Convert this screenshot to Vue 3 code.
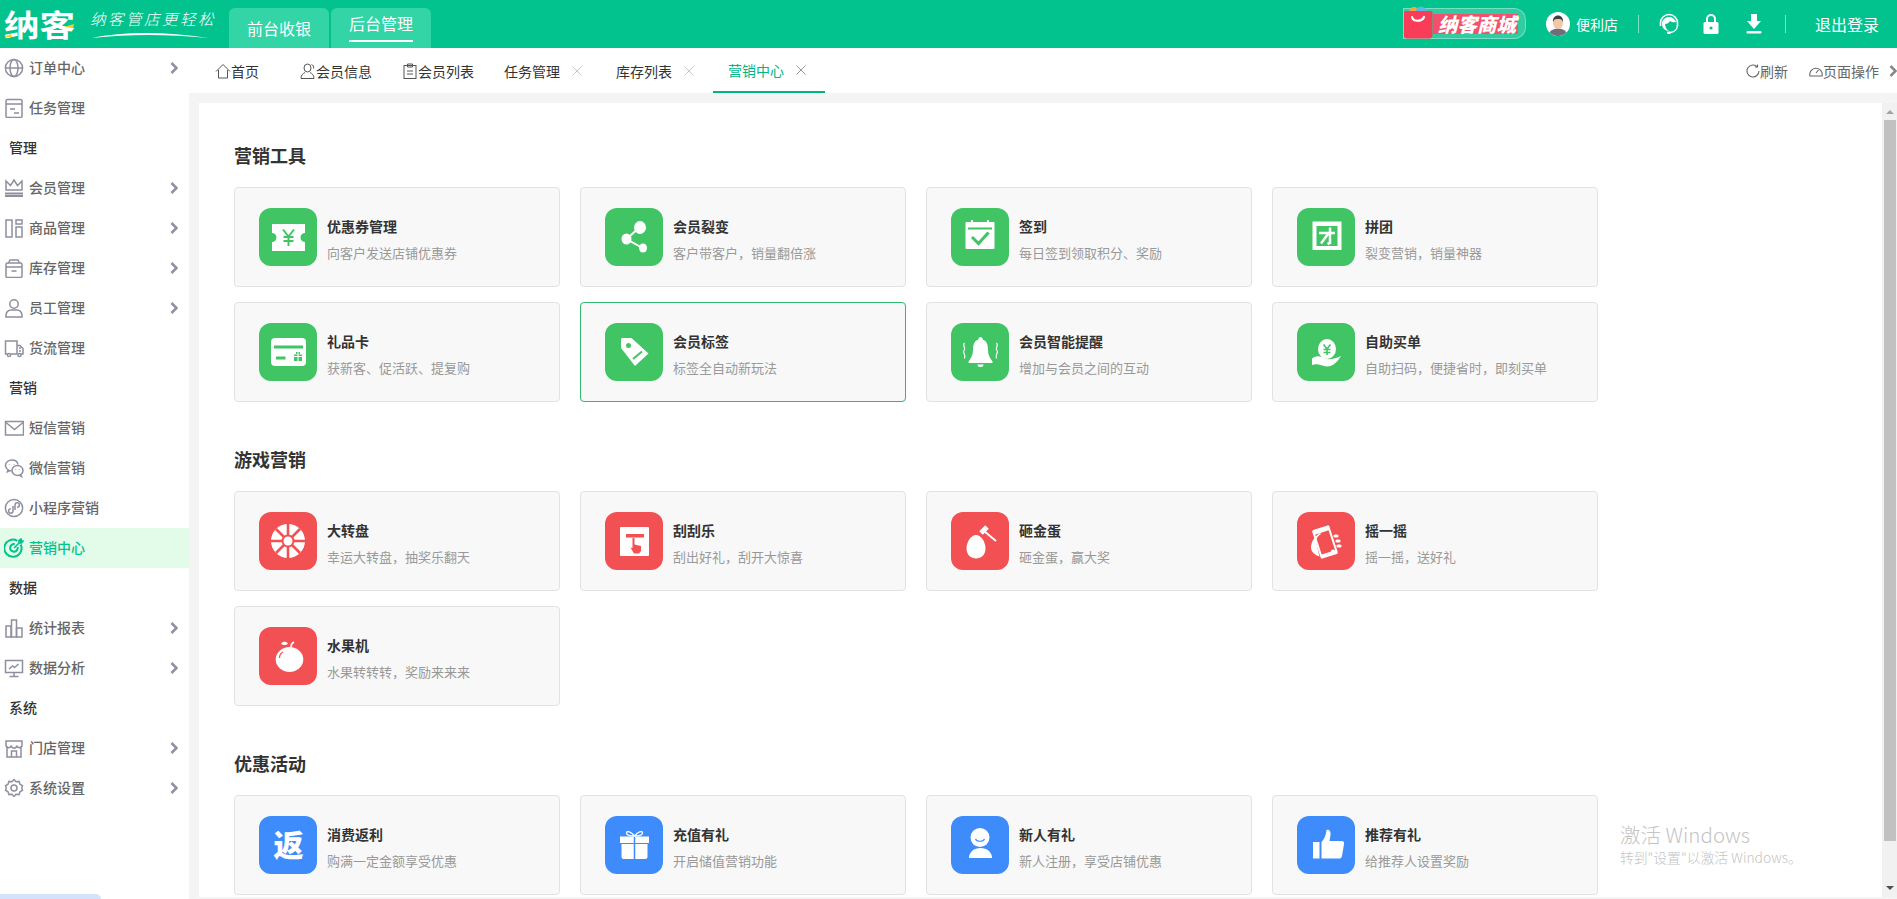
<script setup>
const navIcons = {
  globe: '<circle cx="10" cy="10" r="8.6"/><ellipse cx="10" cy="10" rx="4" ry="8.6"/><path d="M1.4 10h17.2"/>',
  task: '<rect x="2" y="1.5" width="16" height="18" rx="1.5"/><path d="M2 6h16M6 11h5M10 15h5"/>',
  crown: '<path d="M2 12V3l4.5 4.5L10 2l3.5 5.5L18 3v9z"/><path d="M1 15.5h18M1 18h18" stroke-width="2"/>',
  goods: '<rect x="2" y="2" width="6" height="17"/><rect x="12" y="2" width="6" height="4"/><rect x="12" y="9" width="6" height="10"/>',
  box: '<path d="M4.5 5l1.5-3h8l1.5 3"/><rect x="2" y="5" width="16" height="14.5" rx="1.5"/><path d="M2 9h16M7.5 13h5"/>',
  user: '<circle cx="10" cy="6" r="4.2"/><path d="M2 19v-2c0-3 2.5-5 5-5h6c2.5 0 5 2 5 5v2z"/>',
  truck: '<path d="M13 16H7M3.5 16H1.5V3h11.5v13"/><path d="M13 7.5h3l3 3v5.5h-2"/><circle cx="5" cy="17" r="1.6"/><circle cx="15.5" cy="17" r="1.6"/><path d="M15 10h2M15 13h2"/>',
  mail: '<rect x="1.5" y="3.5" width="18" height="13.5"/><path d="M2 4.5l8.5 7 8.5-7"/>',
  wechat: '<path d="M14 6.500C13.500 3.500 11 2 8 2 4.500 2 1.500 4.300 1.500 7.400c0 1.800 1 3.300 2.500 4.300l-.6 2 2.300-1.200c.7.200 1.400.3 2 .3"/><ellipse cx="13.500" cy="12.500" rx="5.500" ry="5"/><path d="M16.500 16.500l1 2-2.500-1.300M11.500 11.500v.5M15.500 11.500v.5M5.500 6.500v.5M10 6.500v.5"/>',
  mini: '<circle cx="10" cy="10" r="8.600"/><path d="M9 8v5a2.200 2.200 0 1 1-2.200-2.200M11 12V7a2.200 2.200 0 1 1 2.200 2.200"/>',
  target: '<path d="M16.700 6.500a8.600 8.600 0 1 1-3.400-3.700" stroke-width="2"/><path d="M13.600 9a3.800 3.800 0 1 1-2.800-2.800" stroke-width="2"/><path d="M10 10l7-7M15 5V2.500L17 1l.3 1.700L19 3l-1.500 2z" stroke-width="1.600"/>',
  chart: '<rect x="2" y="8" width="5" height="11"/><rect x="7.500" y="2" width="5" height="17"/><rect x="12.500" y="10" width="5.500" height="9"/>',
  monitor: '<rect x="1.500" y="2.500" width="17" height="12"/><path d="M10 14.500V18M5.500 18.500h9M5 11l3.500-3 2 1.500L14.500 6"/>',
  store: '<path d="M3 8v11h14V8M2 3h16v4.500a2.700 2.700 0 0 1-5.300 0 2.700 2.700 0 0 1-5.400 0A2.700 2.700 0 0 1 2 7.500z"/><path d="M7.500 19v-6h5v6"/>',
  gear: '<path d="M10 1.500l2 2.200 3-.3 1 2.800 2.500 1.600-.8 2.200.8 2.200L16 13.800l-1 2.800-3-.3-2 2.200-2-2.200-3 .3-1-2.800L1.500 12.200l.8-2.200-.8-2.200L4 6.200l1-2.800 3 .3z"/><circle cx="10" cy="10" r="3"/>',
}

const menu = [
  { name: '订单中心', icon: 'globe', arrow: true },
  { name: '任务管理', icon: 'task' },
  { name: '管理', group: true },
  { name: '会员管理', icon: 'crown', arrow: true },
  { name: '商品管理', icon: 'goods', arrow: true },
  { name: '库存管理', icon: 'box', arrow: true },
  { name: '员工管理', icon: 'user', arrow: true },
  { name: '货流管理', icon: 'truck' },
  { name: '营销', group: true },
  { name: '短信营销', icon: 'mail' },
  { name: '微信营销', icon: 'wechat' },
  { name: '小程序营销', icon: 'mini' },
  { name: '营销中心', icon: 'target', active: true },
  { name: '数据', group: true },
  { name: '统计报表', icon: 'chart', arrow: true },
  { name: '数据分析', icon: 'monitor', arrow: true },
  { name: '系统', group: true },
  { name: '门店管理', icon: 'store', arrow: true },
  { name: '系统设置', icon: 'gear', arrow: true },
]

const tabIcons = {
  home: '<path d="M1 8.500L8 1.500l7 7M3.500 7v8h9V7"/>',
  member: '<ellipse cx="7.500" cy="5" rx="3.500" ry="4"/><path d="M1 15.500c0-3.500 2-5 4-6M14 15.500c0-3.500-2-5-4-6M1 15.500h13M11.500 1.500c1.500.5 2.500 2 2 4"/>',
  list: '<rect x="2" y="2.500" width="12" height="13"/><path d="M5.500 1h5v3h-5zM5 8h6M5 11h6"/>',
}

const tabs = [
  { name: '首页', icon: 'home', cls: 'tabHome' },
  { name: '会员信息', icon: 'member' },
  { name: '会员列表', icon: 'list' },
  { name: '任务管理', close: true },
  { name: '库存列表', close: true },
  { name: '营销中心', close: true, active: true },
]

const G = '#41c464'
const R = '#f25052'
const B = '#3e8bfc'

const tileIcons = {
  coupon: `<path fill="#fff" d="M13 16h33v9a4.500 4.500 0 0 0 0 9v9H13v-9a4.500 4.500 0 0 0 0-9z"/><path fill="none" stroke="${G}" stroke-width="2" d="M24 21.500l5.500 7 5.500-7M29.500 28v10M24.500 29h10M24.500 33h10"/>`,
  share: '<path fill="none" stroke="#fff" stroke-width="2" d="M35 19L21.500 31l16 9"/><ellipse cx="35" cy="19.500" rx="6" ry="6.500" fill="#fff"/><ellipse cx="21.500" cy="31" rx="5" ry="5.500" fill="#fff"/><ellipse cx="38" cy="40" rx="4" ry="4.500" fill="#fff"/>',
  calendar: `<rect x="14.500" y="14" width="29" height="27" rx="1" fill="#fff"/><path stroke="#fff" stroke-width="2" d="M21 12v4M37 12v4"/><path stroke="${G}" stroke-width="2" d="M17 20.500h24"/><path fill="none" stroke="${G}" stroke-width="3" d="M21 29l6.500 6.500 10-11"/>`,
  team: `<rect x="15.500" y="13.500" width="29" height="28.500" fill="#fff"/><path fill="${G}" d="M19.500 18h21v20h-21z"/><path stroke="#fff" stroke-width="2.500" fill="none" d="M22 25h16M33 19.500v15.500l-2.500 1M31 26l-7 9.500"/>`,
  card: `<rect x="12" y="15" width="35" height="28" rx="4" fill="#fff"/><path stroke="${G}" stroke-width="3" d="M15 24h29M17 35h9.500"/><path fill="${G}" d="M35 31.500h8V38h-8zM37 29h4v2h-4z"/><path stroke="#fff" d="M39 29v9M35 33.500h8"/>`,
  tag: `<path fill="#fff" d="M17 15h9.500l17 15.500L30 43 16 25v-9z"/><circle cx="23.500" cy="22.500" r="2.500" fill="${G}"/><path stroke="${G}" stroke-width="2" d="M28 36l9-7.500"/>`,
  bell: '<path fill="#fff" d="M29.500 14c1.500 0 2 1 2.200 2.500C36 18 37 22 37 27c0 5 2 8 4.500 11.500V40h-24v-1.500C20 35 22 32 22 27c0-5 1-9 5.300-10.500.2-1.500.7-2.500 2.200-2.500zM26.500 41.500h6a3 2.500 0 0 1-6 0z"/><path fill="none" stroke="#fff" stroke-width="1.200" d="M13.500 20c-3 2.500 2 4-.5 7.500-2 2.500 2.500 4 .5 8M45.500 20c3 2.500-2 4 .5 7.500 2 2.500-2.500 4-.5 8"/>',
  hand: `<ellipse cx="30" cy="26" rx="9" ry="10" fill="#fff"/><path fill="none" stroke="${G}" stroke-width="1.600" d="M26.500 21.500l3.500 4.500 3.500-4.500M30 26v6M26.500 26.500h7M26.500 29.500h7"/><path fill="#fff" d="M15 35.500c4-3.500 9-2.500 13 0 4 1.500 8 1 16-2.500-3 5-8 11-14.500 10.500-4-.5-9-3.500-14.500-1.500z"/>`,
  wheel: `<circle cx="29" cy="29" r="17" fill="#fff"/><path stroke="${R}" stroke-width="2.600" d="M29 12v34M12 29h34M17 17l24 24M41 17L17 41"/><circle cx="29" cy="29" r="6.500" fill="${R}"/><circle cx="29" cy="29" r="4.500" fill="#fff"/>`,
  scratch: `<rect x="15" y="15" width="29" height="29" rx="1" fill="#fff"/><path fill="${R}" d="M21 22h18v3.500H21z"/><path fill="${R}" d="M27.500 26h2v6.500l6.500 1.500v5l-2 2.500h-5l-3.500-6 2 .5z"/>`,
  apple: `<ellipse cx="30.500" cy="32.500" rx="13.800" ry="12.500" fill="#fff"/><path fill="#fff" d="M22 16.500c2-2.500 5-2.500 7 0-2 2-5 2-7 0z"/><path fill="none" stroke="#fff" stroke-width="1.500" d="M32 20c0-2 1-4 3-5"/><path fill="none" stroke="${R}" stroke-width="1.200" d="M20.500 31c0-3 1.500-5 3.500-6"/>`,
  egg: '<path fill="#fff" d="M25 23c5 0 9.500 7 9.500 13.500S30 46.500 25 46.500 15.500 43 15.500 36.500 20 23 25 23z"/><path stroke="#fff" stroke-width="2" d="M33 19l12 10"/><path stroke="#fff" stroke-width="5" d="M30 21l6-6"/>',
  shake: `<g transform="rotate(-18 28 30)"><rect x="19" y="15" width="18" height="30" rx="1.500" fill="#fff"/><rect x="21" y="20" width="14" height="21" fill="${R}"/></g><path fill="#fff" d="M23 21c-5 3-9 9-9 14.500 0 5 5 8 8.500 9l-3.500-15c0-3 2-6 5-7.500z"/><path stroke="#fff" stroke-width="3.200" stroke-linecap="round" d="M38 24h2M40 29h2M41 34h2"/><circle cx="36" cy="39.500" r="2" fill="#fff"/>`,
  rebate: '<text x="29.500" y="40" text-anchor="middle" fill="#fff" font-size="30" font-weight="900" font-family="Noto Sans CJK SC">返</text>',
  gift: `<path fill="#fff" d="M15 20.500h29V27H15zM16.500 28h26v13a2 2 0 0 1-2 2h-22a2 2 0 0 1-2-2z"/><path stroke="${B}" stroke-width="1.500" d="M29.500 20.500V43"/><path fill="none" stroke="#fff" stroke-width="1.300" d="M29.500 20c-3-4-8-6-8-3 0 2 4 3 8 3zm0 0c3-4 8-6 8-3 0 2-4 3-8 3z"/>`,
  person: `<ellipse cx="29" cy="21.500" rx="9.500" ry="9.500" fill="#fff"/><path fill="none" stroke="${B}" stroke-width="1.200" d="M24.500 23c1.500 3 7.500 3 9 0"/><path fill="#fff" d="M18 42c0-6 5-10 11.500-10S41 36 41 42z"/>`,
  thumb: '<path fill="#fff" d="M16 26h6.500v16.500H16zM24.500 26c3-3 4.500-7 5-12 3-1 4.500 2 4 5l-1 6h12c2 0 3 1 2.500 3l-2 12c-.5 2-1.500 2.500-3 2.500H24.500z"/>',
}

const sections = [
  {
    title: '营销工具',
    color: G,
    cards: [
      { name: '优惠券管理', desc: '向客户发送店铺优惠券', icon: 'coupon' },
      { name: '会员裂变', desc: '客户带客户，销量翻倍涨', icon: 'share' },
      { name: '签到', desc: '每日签到领取积分、奖励', icon: 'calendar' },
      { name: '拼团', desc: '裂变营销，销量神器', icon: 'team' },
      { name: '礼品卡', desc: '获新客、促活跃、提复购', icon: 'card' },
      { name: '会员标签', desc: '标签全自动新玩法', icon: 'tag', active: true },
      { name: '会员智能提醒', desc: '增加与会员之间的互动', icon: 'bell' },
      { name: '自助买单', desc: '自助扫码，便捷省时，即刻买单', icon: 'hand' },
    ],
  },
  {
    title: '游戏营销',
    color: R,
    cards: [
      { name: '大转盘', desc: '幸运大转盘，抽奖乐翻天', icon: 'wheel' },
      { name: '刮刮乐', desc: '刮出好礼，刮开大惊喜', icon: 'scratch' },
      { name: '砸金蛋', desc: '砸金蛋，赢大奖', icon: 'egg' },
      { name: '摇一摇', desc: '摇一摇，送好礼', icon: 'shake' },
      { name: '水果机', desc: '水果转转转，奖励来来来', icon: 'apple' },
    ],
  },
  {
    title: '优惠活动',
    color: B,
    cards: [
      { name: '消费返利', desc: '购满一定金额享受优惠', icon: 'rebate' },
      { name: '充值有礼', desc: '开启储值营销功能', icon: 'gift' },
      { name: '新人有礼', desc: '新人注册，享受店铺优惠', icon: 'person' },
      { name: '推荐有礼', desc: '给推荐人设置奖励', icon: 'thumb' },
    ],
  },
]
</script>

<template>
  <div class="page">
    <header class="topBar">
      <svg class="logo" viewBox="0 0 229 48" width="229" height="48">
        <text x="4" y="36" fill="#fff" font-size="30" font-weight="700" textLength="71" lengthAdjust="spacingAndGlyphs" font-family="Noto Sans CJK SC">纳客</text>
        <path d="M4 37l7-3 1 3zM64 27l10-3-1 4z" fill="#f2d21f" />
        <text x="90" y="25" fill="#fff" font-size="15.500" font-weight="300" letter-spacing="2.500" font-style="italic" font-family="Noto Sans CJK SC">纳客管店更轻松</text>
        <path d="M92 38c30-6 70-7 116 0-40-4-80-4-116 0z" fill="#fff" />
      </svg>
      <div class="modeTab">前台收银</div>
      <div class="modeTab current"><span>后台管理</span></div>

      <div class="topRight">
        <div class="mall">
          <svg class="bag" viewBox="0 0 30 34" width="30" height="34">
            <circle cx="11" cy="7" r="5" fill="#f6a93b" />
            <circle cx="18" cy="7" r="5.500" fill="#5cb6e6" />
            <path d="M2 6h26a1.500 1.500 0 0 1 1.500 1.500v23c0 2-1.500 3-3 3H4c-2 0-3-1-3-3v-23A1.500 1.500 0 0 1 2 6z" fill="#fb3c58" />
            <path d="M9 12c1 5 10 5 12 0" fill="none" stroke="#fff" stroke-width="2.200" stroke-linecap="round" />
          </svg>
          <span>纳客商城</span>
        </div>
        <svg class="avatar" viewBox="0 0 24 24" width="24" height="24">
          <circle cx="12" cy="12" r="12" fill="#fff" />
          <path d="M3.500 20.500c2-3 5-4 8.500-4s6.500 1 8.500 4a12 12 0 0 1-17 0z" fill="#6d6f7b" />
          <ellipse cx="12" cy="11" rx="5" ry="6" fill="#f3c6a4" />
          <path d="M7 10c-.5-4 2-6.500 5-6.500s5.500 2.500 5 6.500c-1-2.500-2-3-5-3s-4 .5-5 3z" fill="#3f3f46" />
        </svg>
        <span class="shop">便利店</span>
        <i class="divider"></i>
        <svg class="headset" viewBox="0 0 20 22" width="20" height="22">
          <path d="M1.500 13V10a8.500 8.500 0 0 1 17 0v3" fill="none" stroke="#fff" stroke-width="1.600" />
          <path d="M3 11c0-4 3-7 7-7 3.500 0 6 2 7 5-2 .5-4 .5-6-1-1 2-3 3-5 3 0 3 2 6 4 7-4 0-7-3-7-7z" fill="#fff" />
          <path d="M18.500 12c0 4-3 7-7 7.500" fill="none" stroke="#fff" stroke-width="1.500" />
          <rect x="8" y="18.500" width="4" height="2.500" rx="1.200" fill="#fff" />
        </svg>
        <svg class="lock" viewBox="0 0 16 20" width="16" height="20">
          <path d="M4 9V5a4 4 0 0 1 8 0v4" fill="none" stroke="#fff" stroke-width="2" />
          <rect x="0.500" y="8" width="15" height="12" rx="1.500" fill="#fff" />
          <circle cx="8" cy="14" r="1.600" fill="#02c38d" />
        </svg>
        <svg class="download" viewBox="0 0 16 20" width="16" height="20">
          <path d="M5 0h6v7h4l-7 8-7-8h4z" fill="#fff" />
          <rect x="0.500" y="17" width="15" height="2.500" rx="1" fill="#fff" />
        </svg>
        <i class="divider second"></i>
        <span class="logout">退出登录</span>
      </div>
    </header>

    <div class="bodyRow">
      <aside class="sideMenu">
        <template v-for="item in menu" :key="item.name">
          <div v-if="item.group" class="menuGroup">{{ item.name }}</div>
          <div v-else class="menuItem" :class="{ active: item.active }">
            <svg class="menuIcon" viewBox="0 0 20 20" width="20" height="20" v-html="navIcons[item.icon]"></svg>
            <span>{{ item.name }}</span>
            <svg v-if="item.arrow" class="chevron" viewBox="0 0 8 12" width="8" height="12"><path d="M1.500 1l5 5-5 5" /></svg>
          </div>
        </template>
        <div class="sideScroll"></div>
      </aside>

      <main class="mainArea">
        <nav class="tabBar">
          <div v-for="tab in tabs" :key="tab.name" class="tab" :class="[tab.cls, { active: tab.active }]">
            <svg v-if="tab.icon" class="tabIcon" viewBox="0 0 16 16" width="16" height="16" v-html="tabIcons[tab.icon]"></svg>
            <span>{{ tab.name }}</span>
            <svg v-if="tab.close" class="tabClose" viewBox="0 0 10 10" width="10" height="10"><path d="M.5.5l9 9M9.500.5l-9 9" /></svg>
          </div>
          <div class="tabTools">
            <div class="tool">
              <svg viewBox="0 0 14 14" width="14" height="14"><path d="M11.500 3A6 6 0 1 0 13 7M11.500.5V3H9" /></svg>
              <span>刷新</span>
            </div>
            <div class="tool">
              <svg viewBox="0 0 14 14" width="14" height="14"><path d="M1 12a6.200 6.200 0 1 1 12 0zM7 9l2.500-3" /></svg>
              <span>页面操作</span>
            </div>
            <svg class="toolArrow" viewBox="0 0 8 12" width="8" height="12"><path d="M1.500 1l5 5-5 5" /></svg>
          </div>
        </nav>

        <div class="contentWrap">
          <div class="panel">
            <div class="panelInner">
              <section v-for="section in sections" :key="section.title" class="section">
                <h2>{{ section.title }}</h2>
                <div class="cardGrid">
                  <div v-for="card in section.cards" :key="card.name" class="card" :class="{ active: card.active }">
                    <svg class="tile" viewBox="0 0 58 58" width="58" height="58" :style="{ background: section.color }" v-html="tileIcons[card.icon]"></svg>
                    <div class="cardText">
                      <p class="cardName">{{ card.name }}</p>
                      <p class="cardDesc">{{ card.desc }}</p>
                    </div>
                  </div>
                </div>
              </section>
            </div>
            <div class="scrollBar">
              <i class="arrowUp"></i>
              <div class="thumb"></div>
              <i class="arrowDown"></i>
            </div>
            <div class="watermark">
              <p class="wmTitle">激活 Windows</p>
              <p class="wmSub">转到"设置"以激活 Windows。</p>
            </div>
          </div>
        </div>
      </main>
    </div>
  </div>
</template>

<style>
html, body {
  margin: 0;
  height: 100%;
  overflow: hidden;
}
</style>

<style scoped>
.page {
  height: 899px;
  display: flex;
  flex-direction: column;
  font-family: "Noto Sans CJK SC", "Liberation Sans", sans-serif;
  color: #333;
  overflow: hidden;
}

p, h2 {
  margin: 0;
}

.topBar {
  height: 48px;
  flex: none;
  background-color: #02c38d;
  display: flex;
  color: #fff;
}

.logo {
  flex: none;
}

.modeTab {
  width: 100px;
  height: 40px;
  margin-top: 8px;
  margin-right: 2px;
  background-color: #33d4a6;
  border-radius: 6px 6px 0 0;
  font-size: 16px;
  line-height: 40px;
  text-align: center;
}

.modeTab.current span {
  display: inline-block;
  height: 32px;
  line-height: 30px;
  vertical-align: top;
  margin-top: 0;
  border-bottom: 2px solid #fff;
}

.topRight {
  margin-left: auto;
  display: flex;
  align-items: center;
  padding-right: 18px;
}

.mall {
  position: relative;
  width: 123px;
  height: 31px;
  box-sizing: border-box;
  margin-top: -1px;
  border: 1px solid rgba(255, 255, 255, 0.35);
  background-color: rgba(255, 255, 255, 0.18);
  border-radius: 0 12px 12px 0;
  display: flex;
  align-items: center;
}

.bag {
  position: absolute;
  left: -1px;
  top: -4px;
}

.mall span {
  margin-left: 29px;
  padding: 0 2px 0 5px;
  background-color: #f4506c;
  font-size: 19.500px;
  line-height: 20px;
  font-weight: 900;
  font-style: italic;
  white-space: nowrap;
}

.avatar {
  margin-left: 20px;
}

.shop {
  margin-left: 6px;
  font-size: 14px;
  line-height: 20px;
}

.divider {
  width: 1px;
  height: 18px;
  margin-left: 20px;
  background-color: rgba(255, 255, 255, 0.5);
}

.headset {
  margin-left: 20px;
}

.lock {
  margin-left: 24px;
}

.download {
  margin-left: 27px;
}

.divider.second {
  margin-left: 23px;
}

.logout {
  margin-left: 29px;
  font-size: 16px;
  line-height: 24px;
}

.bodyRow {
  flex: 1;
  display: flex;
  min-height: 0;
}

.sideMenu {
  position: relative;
  width: 189px;
  flex: none;
  background-color: #fff;
}

.menuGroup,
.menuItem {
  height: 40px;
  font-size: 14px;
}

.menuGroup {
  line-height: 38px;
  padding-left: 9px;
  color: #333;
  font-weight: 500;
}

.menuItem {
  display: flex;
  align-items: center;
  line-height: 20px;
  padding: 0 11px 0 4px;
  color: #666;
  font-weight: 500;
}

.menuItem span {
  margin-top: -2px;
}

.menuIcon {
  flex: none;
  margin-right: 5px;
  fill: none;
  stroke: #8f8f9f;
  stroke-width: 1.500;
}

.chevron {
  margin-left: auto;
  fill: none;
  stroke: #8f8f9f;
  stroke-width: 2.500;
}

.menuItem.active {
  background-color: #e2fce9;
  color: #02c38d;
}

.menuItem.active .menuIcon {
  stroke: #02c38d;
}

.sideScroll {
  position: absolute;
  left: 0;
  bottom: 0;
  width: 101px;
  height: 5px;
  background-color: #d4e3fb;
  border-radius: 0 5px 0 0;
}

.mainArea {
  flex: 1;
  min-width: 0;
  display: flex;
  flex-direction: column;
  background-color: #f4f4f4;
}

.tabBar {
  height: 45px;
  flex: none;
  background-color: #fff;
  display: flex;
  padding-left: 11px;
  box-sizing: border-box;
}

.tab {
  height: 45px;
  box-sizing: border-box;
  padding: 0 15px;
  display: flex;
  align-items: center;
  font-size: 14px;
  color: #333;
  white-space: nowrap;
}

.tabHome {
  padding-right: 26px;
}

.tabIcon {
  fill: none;
  stroke: #555;
  stroke-width: 1;
}

.tabClose {
  margin-left: 12px;
  margin-right: 4px;
  fill: none;
  stroke: #c8c8c8;
  stroke-width: 1;
}

.tab.active {
  color: #02b583;
  border-bottom: 2px solid #02b583;
}

.tab.active .tabClose {
  stroke: #999;
}

.tabTools {
  margin-left: auto;
  display: flex;
  align-items: center;
  color: #666;
  font-size: 14px;
}

.tool {
  display: flex;
  align-items: center;
  margin-right: 21px;
}

.tool + .tool {
  margin-right: 10px;
}

.tool svg {
  fill: none;
  stroke: #666;
  stroke-width: 1.100;
}

.toolArrow {
  fill: none;
  stroke: #888;
  stroke-width: 2.500;
}

.contentWrap {
  flex: 1;
  min-height: 0;
  padding: 10px 0 2px 10px;
  display: flex;
}

.panel {
  position: relative;
  flex: 1;
  display: flex;
  background-color: #fff;
  overflow: hidden;
}

.panelInner {
  flex: 1;
  padding: 39px 0 0 35px;
}

.section {
  margin-bottom: 45px;
}

.section h2 {
  font-size: 18px;
  line-height: 26px;
  font-weight: 700;
  color: #333;
  margin-bottom: 19px;
}

.section + .section {
  margin-top: -1px;
}

.cardGrid {
  display: grid;
  grid-template-columns: repeat(4, 326px);
  grid-auto-rows: 100px;
  gap: 15px 20px;
}

.card {
  display: flex;
  align-items: center;
  box-sizing: border-box;
  padding-left: 24px;
  background-color: #f8f8f8;
  border: 1px solid #e2e2e2;
  border-radius: 4px;
}

.card.active {
  border-color: #2eb872;
}

.tile {
  flex: none;
  border-radius: 12px;
}

.cardText {
  margin-left: 10px;
  margin-top: 4px;
}

.cardName {
  font-size: 14px;
  line-height: 20px;
  font-weight: 700;
  color: #333;
}

.cardDesc {
  margin-top: 7px;
  font-size: 13px;
  line-height: 20px;
  color: #999;
}

.scrollBar {
  flex: none;
  width: 15px;
  background-color: #f1f1f1;
  position: relative;
  padding: 17px 1px 0 2px;
  box-sizing: border-box;
}

.thumb {
  height: 721px;
  background-color: #c1c1c1;
}

.arrowUp,
.arrowDown {
  position: absolute;
  left: 4px;
  border-left: 4px solid transparent;
  border-right: 4px solid transparent;
}

.arrowUp {
  top: 7px;
  border-bottom: 4px solid #a3a3a3;
}

.arrowDown {
  bottom: 7px;
  border-top: 4px solid #505050;
}

.watermark {
  position: absolute;
  left: 1421px;
  top: 718px;
  color: #c4c4c4;
  font-weight: 300;
  white-space: nowrap;
}

.wmTitle {
  font-size: 20.500px;
  line-height: 26px;
}

.wmSub {
  font-size: 13.800px;
  line-height: 20px;
}
</style>
